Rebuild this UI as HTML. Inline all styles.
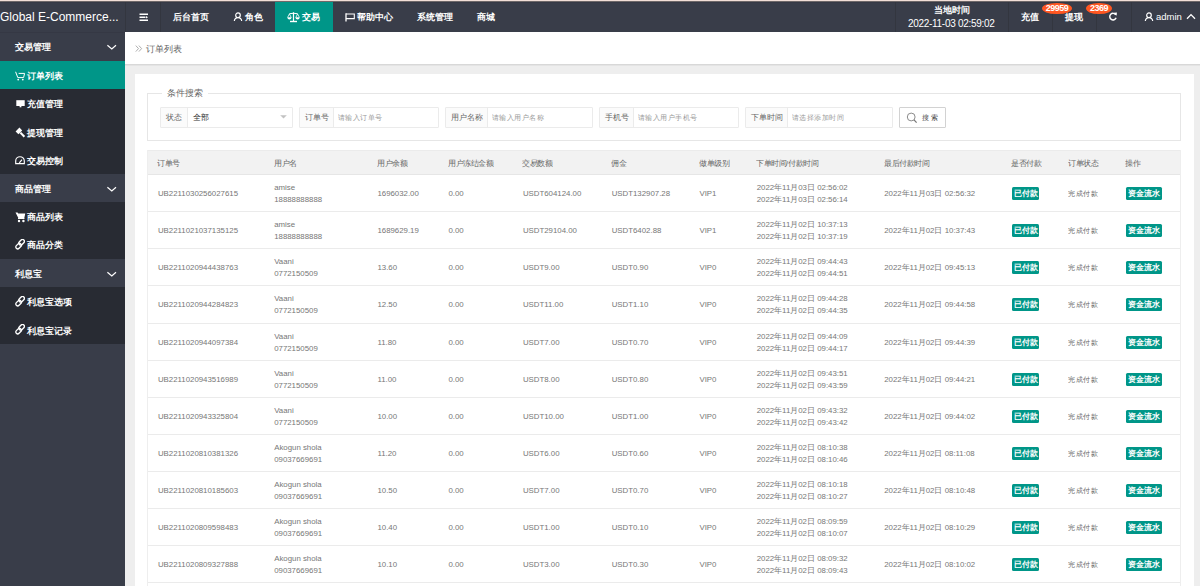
<!DOCTYPE html>
<html><head><meta charset="utf-8"><title>订单列表</title><style>
*{margin:0;padding:0;box-sizing:border-box}
html,body{width:1200px;height:586px;overflow:hidden}
body{position:relative;background:#eeeeee;font-family:"Liberation Sans",sans-serif;color:#666}
.a{position:absolute;white-space:nowrap}
#strip0{position:absolute;left:0;top:0;width:1200px;height:1px;background:#f2dfd7}
#strip1{position:absolute;left:0;top:1px;width:1200px;height:1px;background:#6e6869}
#hdr{position:absolute;left:0;top:2px;width:1200px;height:30px;background:#393d49}
.hsep{position:absolute;top:2px;width:1px;height:30px;background:#33363f}
.ht{position:absolute;color:#fff;font-size:9px;line-height:10px;white-space:nowrap}
#logo{position:absolute;left:0;top:10px;color:#fff;font-size:12px;line-height:14px;white-space:nowrap}
#side{position:absolute;left:0;top:32px;width:125px;height:554px;background:#393d49}
.grp{position:absolute;left:0;width:125px;color:#fff;font-size:8.6px}
.kids{position:absolute;left:0;width:125px;background:#282b33}
.it{position:absolute;left:0;width:125px;color:#fff;font-size:8.5px}
.it .tx,.grp .tx{position:absolute;white-space:nowrap;line-height:10px}
.act{background:#009688}
#crumb{position:absolute;left:125px;top:32px;width:1075px;height:33px;background:#fff;border-bottom:1px solid #d8d8d8;box-shadow:0 1px 0 #e4e4e4}
#card{position:absolute;left:135px;top:74px;width:1059px;height:520px;background:#fff}
#fs{position:absolute;left:147px;top:93px;width:1034px;height:48px;border:1px solid #e6e6e6}
#legend{position:absolute;left:162px;top:88px;padding:0 5px;background:#fff;font-size:8.75px;line-height:10px;color:#666;white-space:nowrap}
.inp{position:absolute;top:107px;height:21px;border:1px solid #ebebeb;border-radius:1px;background:#fff}
.lab{position:absolute;left:0;top:0;bottom:0;background:#fbfbfb;border-right:1px solid #ebebeb;font-size:7.5px;line-height:19px;color:#666;text-align:center}
.ph{position:absolute;top:0;font-size:7.5px;line-height:19px;color:#999;white-space:nowrap}
#btn{position:absolute;left:899px;top:107px;width:47px;height:21px;border:1px solid #d2d2d2;border-radius:1px;background:#fff}
#tbl{position:absolute;left:147px;top:150px;width:1034px;height:440px;border-left:1px solid #eeeeee;border-right:1px solid #eeeeee}
#thead{position:absolute;left:0;top:0;right:0;height:25px;background:#f2f2f2;border-top:1px solid #ebebeb;border-bottom:1px solid #e6e6e6}
.th{position:absolute;top:1.5px;margin-left:-1.2px;font-size:8px;line-height:24px;transform:scale(0.94);transform-origin:0 50%;color:#666;white-space:nowrap}
.tr{position:absolute;left:0;right:0;height:37px;border-bottom:1px solid #ebebeb}
.td{position:absolute;top:0px;margin-left:-0.6px;font-size:7.85px;line-height:37px;color:#777;white-space:nowrap}
.td.two{line-height:12.5px;top:6.6px}
.bdg{display:inline-block;background:#009688;color:#fff;border-radius:1.5px;line-height:13px;height:13px;padding:0 1.8px;font-size:8.2px;font-weight:bold;vertical-align:middle;position:relative;top:-0.8px;left:0.3px}
.badge{position:absolute;top:2.5px;height:11.5px;border-radius:50%;background:#ff5722;color:#fff;font-size:9px;font-weight:bold;letter-spacing:-0.5px;line-height:11.5px;text-align:center}
.b{font-weight:bold}
.grp .tx,.it .tx{font-weight:bold}
.ph.p{transform:scale(0.93);transform-origin:0 50%;margin-left:-1px}
.td.st{transform:scale(0.95);transform-origin:0 50%;color:#666}

</style></head><body>
<div id="strip0"></div><div id="strip1"></div>
<div id="hdr"></div><div class="a" style="left:0;top:2px;width:1200px;height:1px;background:#363945"></div>
<div id="logo">Global E-Commerce...</div>
<div class="hsep" style="left:125px"></div>
<div class="hsep" style="left:160px"></div>
<svg class="a" style="left:138.5px;top:13px" width="10" height="9" viewBox="0 0 10 9"><rect x="0.5" y="0.5" width="8.5" height="1.5" fill="#fff"/><rect x="0.5" y="3.5" width="6" height="1.5" fill="#fff"/><path d="M7 3 L9 4.25 L7 5.5 Z" fill="#fff"/><rect x="0.5" y="6.5" width="8.5" height="1.5" fill="#fff"/></svg>
<div class="ht b" style="left:173px;top:12px">后台首页</div>
<svg class="a" style="left:233px;top:12px" width="10" height="10" viewBox="0 0 10 10"><circle cx="5" cy="3.2" r="2.3" fill="none" stroke="#fff" stroke-width="1.2"/><path d="M1.3 9 Q1.8 5.6 5 5.6 Q8.2 5.6 8.7 9" fill="none" stroke="#fff" stroke-width="1.2"/></svg>
<div class="ht b" style="left:245px;top:12px">角色</div>
<div class="a" style="left:275px;top:2px;width:58px;height:30px;background:#009688"></div>
<svg class="a" style="left:287px;top:12px" width="13" height="11" viewBox="0 0 13 11"><path d="M6.5 0.3 V9.5" stroke="#fff" stroke-width="1.2"/><path d="M2.3 1.8 Q6.5 0.6 10.7 1.8" fill="none" stroke="#fff" stroke-width="1.1"/><path d="M2.4 2 L0.6 5.4 M2.4 2 L4.2 5.4 M10.6 2 L8.8 5.4 M10.6 2 L12.4 5.4" stroke="#fff" stroke-width="0.8"/><path d="M0.3 5.2 H4.6 Q4.4 7.6 2.45 7.6 Q0.5 7.6 0.3 5.2Z" fill="#fff"/><path d="M8.4 5.2 H12.7 Q12.5 7.6 10.55 7.6 Q8.6 7.6 8.4 5.2Z" fill="#fff"/><rect x="3" y="8.8" width="7" height="1.4" fill="#fff"/></svg>
<div class="ht b" style="left:302px;top:12px">交易</div>
<svg class="a" style="left:345px;top:12.5px" width="11" height="9" viewBox="0 0 11 9"><path d="M1 0.3 V8.5" stroke="#fff" stroke-width="1.3"/><path d="M1 1 H9.3 V5.6 H1" fill="none" stroke="#fff" stroke-width="1.1"/></svg>
<div class="ht b" style="left:357px;top:12px">帮助中心</div>
<div class="ht b" style="left:417px;top:12px">系统管理</div>
<div class="ht b" style="left:477px;top:12px">商城</div>
<div class="hsep" style="left:895px"></div>
<div class="hsep" style="left:1008px"></div>
<div class="hsep" style="left:1052px"></div>
<div class="hsep" style="left:1096px"></div>
<div class="hsep" style="left:1131px"></div>
<div class="ht b" style="left:934px;top:4.5px">当地时间</div>
<div class="ht" id="dt" style="left:908px;top:19px;font-size:10px;letter-spacing:-0.3px">2022-11-03 02:59:02</div>
<div class="ht b" style="left:1021px;top:12px">充值</div>
<div class="ht b" style="left:1065px;top:12px">提现</div>
<div class="badge" style="left:1042px;width:30px">29959</div>
<div class="badge" style="left:1086px;width:26px">2369</div>
<svg class="a" style="left:1108.3px;top:12.4px" width="10" height="9.2" viewBox="0 0 11 10"><path d="M8.6 3.2 A3.6 3.6 0 1 0 8.9 6.2" fill="none" stroke="#fff" stroke-width="1.6"/><path d="M6.3 0.9 L9.8 0.6 L9.4 4.2 Z" fill="#fff"/></svg>
<svg class="a" style="left:1144px;top:12px" width="10" height="10" viewBox="0 0 10 10"><circle cx="5" cy="3.2" r="2.3" fill="none" stroke="#fff" stroke-width="1.2"/><path d="M1.3 9 Q1.8 5.6 5 5.6 Q8.2 5.6 8.7 9" fill="none" stroke="#fff" stroke-width="1.2"/></svg>
<div class="ht" id="adm" style="left:1156px;top:12px;font-size:9.5px">admin</div>
<svg class="a" style="left:1186px;top:13px" width="10" height="7" viewBox="0 0 10 7"><path d="M1 5.8 L5 1.6 L9 5.8" fill="none" stroke="#fff" stroke-width="1.3"/></svg>

<div id="side"></div>
<div class="grp" style="top:32px;height:29px"><span class="tx" style="left:15px;top:10px">交易管理</span><svg class="a" style="left:106px;top:10px" width="12" height="8" viewBox="0 0 12 8"><path d="M1.4 3.2 L5.8 7 L10 3.2" fill="none" stroke="#fff" stroke-width="1.2"/></svg></div>
<div class="kids" style="top:61px;height:113px"></div>
<div class="it act" style="top:61px;height:28px"><svg class="a" style="left:15px;top:9.5px" width="11" height="10" viewBox="0 0 11 10"><path d="M0.6 0.8 L2.8 6.6 H8.6 L9.6 2.4 H3.6" fill="none" stroke="#fff" stroke-width="1"/><circle cx="3.2" cy="8.6" r="0.9" fill="#fff"/><circle cx="7.8" cy="8.6" r="0.9" fill="#fff"/></svg><span class="tx" style="left:27.2px;top:10px">订单列表</span></div>
<div class="it" style="top:89px;height:28px"><svg class="a" style="left:15.5px;top:10.5px" width="9" height="8" viewBox="0 0 9 8"><rect x="0.3" y="0.2" width="8.4" height="5.8" fill="#fff"/><rect x="3.6" y="6" width="1.8" height="1.3" fill="#fff"/></svg><span class="tx" style="left:27.2px;top:10px">充值管理</span></div>
<div class="it" style="top:117px;height:29px"><svg class="a" style="left:15px;top:9.5px" width="11" height="11" viewBox="0 0 11 11"><path d="M0.6 4.6 L4.4 0.6 L7.2 3.4 L3.4 7.2 Z" fill="#fff"/><path d="M5.4 5.6 L9.4 9.8" stroke="#fff" stroke-width="2.1"/></svg><span class="tx" style="left:27.2px;top:10.5px">提现管理</span></div>
<div class="it" style="top:146px;height:28px"><svg class="a" style="left:15px;top:9.5px" width="11" height="9" viewBox="0 0 11 9"><path d="M0.7 7.6 V5 A4.3 4.3 0 0 1 9.3 5 V7.6 Z" fill="none" stroke="#fff" stroke-width="1.15"/><path d="M4.3 6.8 L7 3.6" stroke="#fff" stroke-width="1.2"/></svg><span class="tx" style="left:27.2px;top:10px">交易控制</span></div>
<div class="grp" style="top:174px;height:28px"><span class="tx" style="left:15px;top:10px">商品管理</span><svg class="a" style="left:106px;top:10px" width="12" height="8" viewBox="0 0 12 8"><path d="M1.4 3.2 L5.8 7 L10 3.2" fill="none" stroke="#fff" stroke-width="1.2"/></svg></div>
<div class="kids" style="top:202px;height:57px"></div>
<div class="it" style="top:202px;height:28px"><svg class="a" style="left:14.5px;top:9.8px" width="11" height="11" viewBox="0 0 11 11"><path d="M0.5 0.6 H2.6 L3.2 1.6 H10.3 L9.2 6.4 H3.6 Z" fill="#fff"/><rect x="3" y="6" width="6.4" height="1" fill="#fff"/><circle cx="4" cy="9" r="1.2" fill="#fff"/><circle cx="8.4" cy="9" r="1.2" fill="#fff"/></svg><span class="tx" style="left:27.2px;top:10px">商品列表</span></div>
<div class="it" style="top:230px;height:29px"><svg class="a" style="left:14.6px;top:9.4px" width="10.4" height="10.4" viewBox="0 0 11 11"><g fill="none" stroke="#fff" stroke-width="1.45"><rect x="5" y="0.1" width="4" height="6.6" rx="2" transform="rotate(45 7 3.4)"/><rect x="1.8" y="4.2" width="4" height="6.6" rx="2" transform="rotate(45 3.8 7.5)"/></g></svg><span class="tx" style="left:27.2px;top:10px">商品分类</span></div>
<div class="grp" style="top:259px;height:28px"><span class="tx" style="left:15px;top:10px">利息宝</span><svg class="a" style="left:106px;top:10px" width="12" height="8" viewBox="0 0 12 8"><path d="M1.4 3.2 L5.8 7 L10 3.2" fill="none" stroke="#fff" stroke-width="1.2"/></svg></div>
<div class="kids" style="top:287px;height:57px"></div>
<div class="it" style="top:287px;height:28px"><svg class="a" style="left:14.6px;top:9.4px" width="10.4" height="10.4" viewBox="0 0 11 11"><g fill="none" stroke="#fff" stroke-width="1.45"><rect x="5" y="0.1" width="4" height="6.6" rx="2" transform="rotate(45 7 3.4)"/><rect x="1.8" y="4.2" width="4" height="6.6" rx="2" transform="rotate(45 3.8 7.5)"/></g></svg><span class="tx" style="left:27.2px;top:10px">利息宝选项</span></div>
<div class="it" style="top:315px;height:29px"><svg class="a" style="left:14.6px;top:9.4px" width="10.4" height="10.4" viewBox="0 0 11 11"><g fill="none" stroke="#fff" stroke-width="1.45"><rect x="5" y="0.1" width="4" height="6.6" rx="2" transform="rotate(45 7 3.4)"/><rect x="1.8" y="4.2" width="4" height="6.6" rx="2" transform="rotate(45 3.8 7.5)"/></g></svg><span class="tx" style="left:27.2px;top:10.5px">利息宝记录</span></div>

<div class="a" style="left:0;top:32px;width:125px;height:1px;background:#353844"></div>
<div id="crumb"></div>
<svg class="a" style="left:134.5px;top:45px" width="8" height="8" viewBox="0 0 8 8"><path d="M0.8 0.6 L3.5 3.6 L0.8 6.6 M3.9 0.6 L6.6 3.6 L3.9 6.6" fill="none" stroke="#999" stroke-width="0.8"/></svg>
<div class="a" style="left:145.5px;top:43.5px;font-size:8.55px;line-height:10px;color:#666">订单列表</div>
<div id="card"></div>
<div id="fs"></div>
<div id="legend">条件搜索</div>
<div class="inp" style="left:160px;width:133px"><div class="lab" style="width:27px">状态</div><div class="ph" style="left:32px;color:#333">全部</div><svg class="a" style="left:118.6px;top:7.2px" width="8" height="5" viewBox="0 0 8 5"><path d="M0.2 0.3 H6.8 L3.5 3.6 Z" fill="#c2c2c2"/></svg></div>
<div class="inp" style="left:299px;width:140px"><div class="lab" style="width:34px">订单号</div><div class="ph p" style="left:39px">请输入订单号</div></div>
<div class="inp" style="left:445px;width:148px"><div class="lab" style="width:42px">用户名称</div><div class="ph p" style="left:47px">请输入用户名称</div></div>
<div class="inp" style="left:599px;width:140px"><div class="lab" style="width:34px">手机号</div><div class="ph p" style="left:39px">请输入用户手机号</div></div>
<div class="inp" style="left:745px;width:148px"><div class="lab" style="width:42px">下单时间</div><div class="ph p" style="left:47px">请选择添加时间</div></div>
<div id="btn"><svg class="a" style="left:5.6px;top:3.6px" width="13" height="13" viewBox="0 0 13 13"><circle cx="5.2" cy="5" r="3.9" fill="none" stroke="#777" stroke-width="0.85"/><path d="M8 7.9 L10.6 10.6" stroke="#777" stroke-width="1.3"/></svg><div class="ph" style="left:21.5px;top:-0.4px;color:#444;letter-spacing:2.6px;font-size:7.4px">搜索</div></div>

<div id="tbl"><div id="thead"></div><div class="th" style="left:10.5px">订单号</div><div class="th" style="left:126.75px">用户名</div><div class="th" style="left:230px">用户余额</div><div class="th" style="left:301px">用户冻结金额</div><div class="th" style="left:375.5px">交易数额</div><div class="th" style="left:464.25px">佣金</div><div class="th" style="left:552px">做单级别</div><div class="th" style="left:609.25px">下单时间/付款时间</div><div class="th" style="left:736.75px">最后付款时间</div><div class="th" style="left:864px">是否付款</div><div class="th" style="left:921px">订单状态</div><div class="th" style="left:978.5px">操作</div><div class="tr" style="top:25px;height:37px"><div class="td" style="left:10.5px">UB2211030256027615</div><div class="td two" style="left:126.75px">amise<br>18888888888</div><div class="td" style="left:230px">1696032.00</div><div class="td" style="left:301px">0.00</div><div class="td" style="left:375.5px">USDT604124.00</div><div class="td" style="left:464.25px">USDT132907.28</div><div class="td" style="left:552px">VIP1</div><div class="td two" style="left:609.25px">2022年11月03日 02:56:02<br>2022年11月03日 02:56:14</div><div class="td" style="left:736.75px">2022年11月03日 02:56:32</div><div class="td bd" style="left:864px"><span class="bdg">已付款</span></div><div class="td st" style="left:921px">完成付款</div><div class="td bd" style="left:978.5px"><span class="bdg">资金流水</span></div></div><div class="tr" style="top:62px;height:37px"><div class="td" style="left:10.5px">UB2211021037135125</div><div class="td two" style="left:126.75px">amise<br>18888888888</div><div class="td" style="left:230px">1689629.19</div><div class="td" style="left:301px">0.00</div><div class="td" style="left:375.5px">USDT29104.00</div><div class="td" style="left:464.25px">USDT6402.88</div><div class="td" style="left:552px">VIP1</div><div class="td two" style="left:609.25px">2022年11月02日 10:37:13<br>2022年11月02日 10:37:19</div><div class="td" style="left:736.75px">2022年11月02日 10:37:43</div><div class="td bd" style="left:864px"><span class="bdg">已付款</span></div><div class="td st" style="left:921px">完成付款</div><div class="td bd" style="left:978.5px"><span class="bdg">资金流水</span></div></div><div class="tr" style="top:99px;height:37px"><div class="td" style="left:10.5px">UB2211020944438763</div><div class="td two" style="left:126.75px">Vaani<br>0772150509</div><div class="td" style="left:230px">13.60</div><div class="td" style="left:301px">0.00</div><div class="td" style="left:375.5px">USDT9.00</div><div class="td" style="left:464.25px">USDT0.90</div><div class="td" style="left:552px">VIP0</div><div class="td two" style="left:609.25px">2022年11月02日 09:44:43<br>2022年11月02日 09:44:51</div><div class="td" style="left:736.75px">2022年11月02日 09:45:13</div><div class="td bd" style="left:864px"><span class="bdg">已付款</span></div><div class="td st" style="left:921px">完成付款</div><div class="td bd" style="left:978.5px"><span class="bdg">资金流水</span></div></div><div class="tr" style="top:136px;height:38px"><div class="td" style="left:10.5px">UB2211020944284823</div><div class="td two" style="left:126.75px">Vaani<br>0772150509</div><div class="td" style="left:230px">12.50</div><div class="td" style="left:301px">0.00</div><div class="td" style="left:375.5px">USDT11.00</div><div class="td" style="left:464.25px">USDT1.10</div><div class="td" style="left:552px">VIP0</div><div class="td two" style="left:609.25px">2022年11月02日 09:44:28<br>2022年11月02日 09:44:35</div><div class="td" style="left:736.75px">2022年11月02日 09:44:58</div><div class="td bd" style="left:864px"><span class="bdg">已付款</span></div><div class="td st" style="left:921px">完成付款</div><div class="td bd" style="left:978.5px"><span class="bdg">资金流水</span></div></div><div class="tr" style="top:174px;height:37px"><div class="td" style="left:10.5px">UB2211020944097384</div><div class="td two" style="left:126.75px">Vaani<br>0772150509</div><div class="td" style="left:230px">11.80</div><div class="td" style="left:301px">0.00</div><div class="td" style="left:375.5px">USDT7.00</div><div class="td" style="left:464.25px">USDT0.70</div><div class="td" style="left:552px">VIP0</div><div class="td two" style="left:609.25px">2022年11月02日 09:44:09<br>2022年11月02日 09:44:17</div><div class="td" style="left:736.75px">2022年11月02日 09:44:39</div><div class="td bd" style="left:864px"><span class="bdg">已付款</span></div><div class="td st" style="left:921px">完成付款</div><div class="td bd" style="left:978.5px"><span class="bdg">资金流水</span></div></div><div class="tr" style="top:211px;height:37px"><div class="td" style="left:10.5px">UB2211020943516989</div><div class="td two" style="left:126.75px">Vaani<br>0772150509</div><div class="td" style="left:230px">11.00</div><div class="td" style="left:301px">0.00</div><div class="td" style="left:375.5px">USDT8.00</div><div class="td" style="left:464.25px">USDT0.80</div><div class="td" style="left:552px">VIP0</div><div class="td two" style="left:609.25px">2022年11月02日 09:43:51<br>2022年11月02日 09:43:59</div><div class="td" style="left:736.75px">2022年11月02日 09:44:21</div><div class="td bd" style="left:864px"><span class="bdg">已付款</span></div><div class="td st" style="left:921px">完成付款</div><div class="td bd" style="left:978.5px"><span class="bdg">资金流水</span></div></div><div class="tr" style="top:248px;height:37px"><div class="td" style="left:10.5px">UB2211020943325804</div><div class="td two" style="left:126.75px">Vaani<br>0772150509</div><div class="td" style="left:230px">10.00</div><div class="td" style="left:301px">0.00</div><div class="td" style="left:375.5px">USDT10.00</div><div class="td" style="left:464.25px">USDT1.00</div><div class="td" style="left:552px">VIP0</div><div class="td two" style="left:609.25px">2022年11月02日 09:43:32<br>2022年11月02日 09:43:42</div><div class="td" style="left:736.75px">2022年11月02日 09:44:02</div><div class="td bd" style="left:864px"><span class="bdg">已付款</span></div><div class="td st" style="left:921px">完成付款</div><div class="td bd" style="left:978.5px"><span class="bdg">资金流水</span></div></div><div class="tr" style="top:285px;height:37px"><div class="td" style="left:10.5px">UB2211020810381326</div><div class="td two" style="left:126.75px">Akogun shola<br>09037669691</div><div class="td" style="left:230px">11.20</div><div class="td" style="left:301px">0.00</div><div class="td" style="left:375.5px">USDT6.00</div><div class="td" style="left:464.25px">USDT0.60</div><div class="td" style="left:552px">VIP0</div><div class="td two" style="left:609.25px">2022年11月02日 08:10:38<br>2022年11月02日 08:10:46</div><div class="td" style="left:736.75px">2022年11月02日 08:11:08</div><div class="td bd" style="left:864px"><span class="bdg">已付款</span></div><div class="td st" style="left:921px">完成付款</div><div class="td bd" style="left:978.5px"><span class="bdg">资金流水</span></div></div><div class="tr" style="top:322px;height:37px"><div class="td" style="left:10.5px">UB2211020810185603</div><div class="td two" style="left:126.75px">Akogun shola<br>09037669691</div><div class="td" style="left:230px">10.50</div><div class="td" style="left:301px">0.00</div><div class="td" style="left:375.5px">USDT7.00</div><div class="td" style="left:464.25px">USDT0.70</div><div class="td" style="left:552px">VIP0</div><div class="td two" style="left:609.25px">2022年11月02日 08:10:18<br>2022年11月02日 08:10:27</div><div class="td" style="left:736.75px">2022年11月02日 08:10:48</div><div class="td bd" style="left:864px"><span class="bdg">已付款</span></div><div class="td st" style="left:921px">完成付款</div><div class="td bd" style="left:978.5px"><span class="bdg">资金流水</span></div></div><div class="tr" style="top:359px;height:37px"><div class="td" style="left:10.5px">UB2211020809598483</div><div class="td two" style="left:126.75px">Akogun shola<br>09037669691</div><div class="td" style="left:230px">10.40</div><div class="td" style="left:301px">0.00</div><div class="td" style="left:375.5px">USDT1.00</div><div class="td" style="left:464.25px">USDT0.10</div><div class="td" style="left:552px">VIP0</div><div class="td two" style="left:609.25px">2022年11月02日 08:09:59<br>2022年11月02日 08:10:07</div><div class="td" style="left:736.75px">2022年11月02日 08:10:29</div><div class="td bd" style="left:864px"><span class="bdg">已付款</span></div><div class="td st" style="left:921px">完成付款</div><div class="td bd" style="left:978.5px"><span class="bdg">资金流水</span></div></div><div class="tr" style="top:396px;height:37px"><div class="td" style="left:10.5px">UB2211020809327888</div><div class="td two" style="left:126.75px">Akogun shola<br>09037669691</div><div class="td" style="left:230px">10.10</div><div class="td" style="left:301px">0.00</div><div class="td" style="left:375.5px">USDT3.00</div><div class="td" style="left:464.25px">USDT0.30</div><div class="td" style="left:552px">VIP0</div><div class="td two" style="left:609.25px">2022年11月02日 08:09:32<br>2022年11月02日 08:09:43</div><div class="td" style="left:736.75px">2022年11月02日 08:10:02</div><div class="td bd" style="left:864px"><span class="bdg">已付款</span></div><div class="td st" style="left:921px">完成付款</div><div class="td bd" style="left:978.5px"><span class="bdg">资金流水</span></div></div></div>
</body></html>
